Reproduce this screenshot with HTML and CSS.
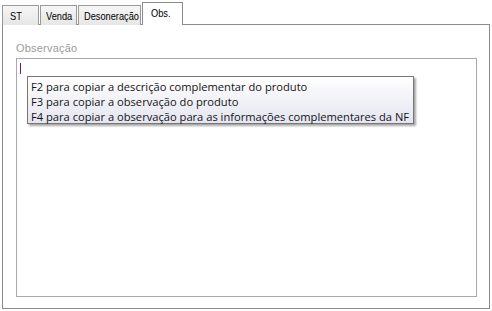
FILE: index.html
```html
<!DOCTYPE html>
<html lang="pt">
<head>
<meta charset="utf-8">
<link rel="stylesheet" href="styles.css">
</head>
<body>
<div class="window">
  <div class="tabs">
    <div class="tab tab-st"><span class="tab-text">ST</span></div>
    <div class="tab tab-venda"><span class="tab-text">Venda</span></div>
    <div class="tab tab-des"><span class="tab-text">Desoneração</span></div>
    <div class="tab tab-obs active"><span class="tab-text">Obs.</span></div>
  </div>
  <div class="panel">
    <div class="label">Observação</div>
    <div class="memo"><span class="caret"></span></div>
  </div>
  <div class="tooltip">
    <div>F2 para copiar a descrição complementar do produto</div>
    <div>F3 para copiar a observação do produto</div>
    <div>F4 para copiar a observação para as informações complementares da NF</div>
  </div>
</div>
</body>
</html>
```
FILE: styles.css
```css
html, body {
  margin: 0;
  padding: 0;
  background: #ffffff;
}
.window {
  position: relative;
  width: 492px;
  height: 311px;
  padding: 2px 0 0 2px;
  box-sizing: border-box;
  font-family: "Liberation Sans", Arial, sans-serif;
}
.tabs {
  display: flex;
  align-items: flex-end;
  height: 23px;
  margin-bottom: -1px;
  position: relative;
  z-index: 1;
}
.tab {
  box-sizing: border-box;
  height: 20px;
  border: 1px solid #9a9a9a;
  border-bottom: none;
  background: linear-gradient(#f6f6f6, #e6e6e6);
  font-size: 11px;
  color: #000;
  padding: 4px 0 0 7px;
  line-height: 13px;
  margin-right: 1px;
  white-space: nowrap;
}
.tab-text {
  display: inline-block;
  transform: scaleX(0.84);
  transform-origin: left center;
}
.tab-st { width: 37px; }
.tab-venda { width: 37px; padding-left: 5px; }
.tab-des { width: 63px; padding-left: 5px; }
.tab.active {
  width: 41px;
  height: 23px;
  background: #ffffff;
  border-color: #8c8c8c;
  padding: 4px 0 0 8px;
}
.panel {
  box-sizing: border-box;
  width: 488px;
  height: 285px;
  border: 1px solid #8c8c8c;
  padding: 17px 0 0 13px;
  background: #fff;
}
.label {
  font-size: 11px;
  color: #9c9c9c;
  line-height: 13px;
  letter-spacing: 0.2px;
  height: 16px;
}
.memo {
  box-sizing: border-box;
  width: 461px;
  height: 239px;
  border: 1px solid #a9a9b0;
  padding: 4px 0 0 3px;
}
.caret {
  display: block;
  width: 0;
  height: 11px;
  border-left: 1px solid #6a1b6a;
}
.tooltip {
  position: absolute;
  left: 27px;
  top: 76px;
  box-sizing: border-box;
  width: 387px;
  height: 48px;
  border: 1px solid #767676;
  background: linear-gradient(#ffffff, #e4e5f0);
  box-shadow: 2px 2px 2px rgba(0, 0, 0, 0.35);
  padding: 2px 0 0 3px;
  font-family: "Open Sans", "Noto Sans", sans-serif;
  font-size: 11.15px;
  line-height: 15px;
  color: #141414;
  white-space: nowrap;
  z-index: 2;
}
```
